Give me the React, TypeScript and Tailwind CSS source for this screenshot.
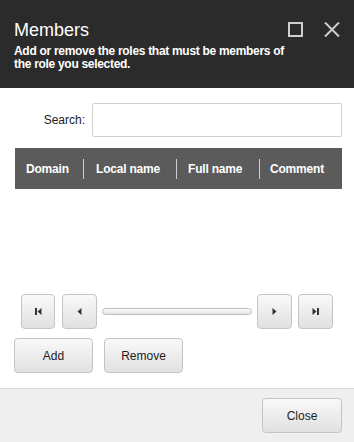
import React from "react";

const btn =
  "flex items-center justify-center rounded-[4px] border border-[#c4c4c4] bg-gradient-to-b from-[#f9f9f9] to-[#e1e1e1] text-[12px] text-[#222]";

function PagerIcon({ kind }: { kind: "first" | "prev" | "next" | "last" }) {
  return (
    <svg width="9" height="9" viewBox="0 0 9 9" fill="#333">
      {kind === "first" && (
        <>
          <rect x="1" y="1" width="2" height="7" />
          <path d="M7.5 1 L3.5 4.5 L7.5 8 Z" />
        </>
      )}
      {kind === "prev" && <path d="M6.5 1 L2.5 4.5 L6.5 8 Z" />}
      {kind === "next" && <path d="M2.5 1 L6.5 4.5 L2.5 8 Z" />}
      {kind === "last" && (
        <>
          <path d="M1.5 1 L5.5 4.5 L1.5 8 Z" />
          <rect x="6" y="1" width="2" height="7" />
        </>
      )}
    </svg>
  );
}

export default function App() {
  const columns = [
    { label: "Domain", w: "w-[68px]", pl: "pl-[11px]" },
    { label: "Local name", w: "w-[93px]", pl: "pl-[12px]" },
    { label: "Full name", w: "w-[83px]", pl: "pl-[11px]" },
    { label: "Comment", w: "flex-1", pl: "pl-[10px]" },
  ];

  return (
    <div className="w-[354px] h-[442px] flex flex-col bg-white font-[Liberation_Sans,Arial,sans-serif] overflow-hidden">
      <header className="h-[88px] shrink-0 bg-[#2b2b2b] flex justify-between pl-[14px] pr-[14px] pt-[19px]">
        <div className="text-white min-w-0 flex-1">
          <h1 className="text-[18px] leading-[22px]">Members</h1>
          <p className="mt-[4px] text-[12px] leading-[13px] font-bold whitespace-nowrap tracking-[-0.3px]">
            Add or remove the roles that must be members of
            <br />
            the role you selected.
          </p>
        </div>
        <div className="flex shrink-0 gap-[21px] pt-[3px]">
          <svg width="15" height="15" viewBox="0 0 15 15" fill="none" stroke="#cfcfcf" strokeWidth="2">
            <rect x="1" y="1" width="13" height="13" />
          </svg>
          <svg width="16" height="15" viewBox="0 0 16 15" fill="none" stroke="#cfcfcf" strokeWidth="2">
            <path d="M1 0.5 L15 14.5 M15 0.5 L1 14.5" />
          </svg>
        </div>
      </header>

      <div className="pl-[15px] pr-[12px]">
        <div className="flex items-center mt-[15px]">
          <label className="w-[70px] text-right text-[12px] text-[#222]">Search:</label>
          <input className="ml-[7px] flex-1 h-[34px] border border-[#d0d0d0] rounded-[2px] outline-none px-2 text-[12px]" />
        </div>

        <div className="mt-[11px] h-[41px] bg-[#5b5b5b] flex items-center">
          {columns.map((c, i) => (
            <div
              key={c.label}
              className={`${c.w} ${c.pl} h-[20px] flex items-center text-[12px] font-bold text-white whitespace-nowrap tracking-[-0.2px] ${
                i > 0 ? "border-l border-[#d0d0d0]" : ""
              }`}
            >
              {c.label}
            </div>
          ))}
        </div>
        <div className="h-[105px]" />

        <div className="flex items-center pl-[6px] pr-[9px] h-[35px]">
          <button className={`${btn} w-[34px] h-[35px]`}>
            <PagerIcon kind="first" />
          </button>
          <button className={`${btn} w-[35px] h-[35px] ml-[7px]`}>
            <PagerIcon kind="prev" />
          </button>
          <div className="flex-1 mx-[5px] h-[7px] rounded-full border border-[#bdbdbd] bg-gradient-to-b from-[#fbfbfb] to-[#e4e4e4]" />
          <button className={`${btn} w-[35px] h-[35px]`}>
            <PagerIcon kind="next" />
          </button>
          <button className={`${btn} w-[35px] h-[35px] ml-[6px]`}>
            <PagerIcon kind="last" />
          </button>
        </div>
      </div>

      <div className="flex gap-[11px] pl-[14px] mt-[9px]">
        <button className={`${btn} w-[79px] h-[35px]`}>Add</button>
        <button className={`${btn} w-[79px] h-[35px]`}>Remove</button>
      </div>

      <footer className="mt-auto h-[54px] shrink-0 border-t border-[#dddddd] bg-[#efefef] flex justify-end items-start pt-[9px] pr-[12px]">
        <button className={`${btn} w-[80px] h-[35px]`}>Close</button>
      </footer>
    </div>
  );
}
